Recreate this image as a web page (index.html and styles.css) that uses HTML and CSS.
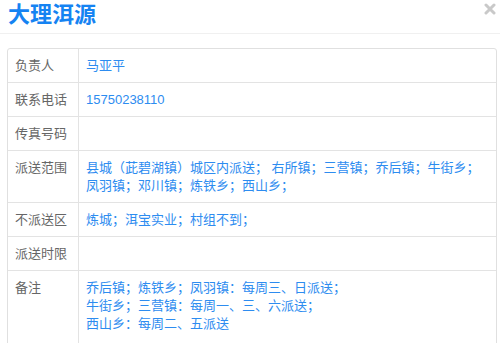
FILE: index.html
```html
<!DOCTYPE html>
<html lang="zh">
<head>
<meta charset="utf-8">
<link rel="stylesheet" href="styles.css">
</head>
<body>
<div class="dialog">
  <div class="header">
    <h1 class="title">大理洱源</h1>
    <span class="close" aria-label="关闭">
      <svg width="12" height="12" viewBox="0 0 12 12"><path d="M2 2 L10 10 M10 2 L2 10" stroke="#c9c9c9" stroke-width="3" stroke-linecap="round"/></svg>
    </span>
  </div>
  <div class="content">
    <table class="info">
      <tr><th>负责人</th><td>马亚平</td></tr>
      <tr><th>联系电话</th><td>15750238110</td></tr>
      <tr><th>传真号码</th><td></td></tr>
      <tr><th>派送范围</th><td>县城（茈碧湖镇）城区内派送； 右所镇；三营镇；乔后镇；牛街乡；凤羽镇；邓川镇；炼铁乡；西山乡；</td></tr>
      <tr><th>不派送区</th><td>炼城；洱宝实业；村组不到；</td></tr>
      <tr><th>派送时限</th><td></td></tr>
      <tr class="last"><th>备注</th><td>乔后镇；炼铁乡；凤羽镇：每周三、日派送；<br>牛街乡；三营镇：每周一、三、六派送；<br>西山乡：每周二、五派送</td></tr>
    </table>
  </div>
</div>
</body>
</html>
```

FILE: styles.css
```css
html, body {
  margin: 0;
  padding: 0;
  background: #fff;
}
body {
  font-family: "Liberation Sans", "Noto Sans CJK SC", sans-serif;
  text-spacing-trim: space-all;
}
.dialog {
  width: 500px;
}
.header {
  height: 33px;
  border-bottom: 1px solid #f0f0f0;
  display: flex;
  justify-content: space-between;
  align-items: flex-start;
  padding: 0 4px 0 8px;
  box-sizing: content-box;
}
.title {
  margin: 0;
  font-size: 22px;
  line-height: 24px;
  font-weight: bold;
  color: #1583f2;
  font-family: "Noto Sans CJK SC", sans-serif;
}
.close {
  display: flex;
  margin-top: 3px;
}
.content {
  padding: 14px 3px 0 7px;
}
.info {
  width: 100%;
  border-collapse: separate;
  border-spacing: 0;
  border: 1px solid #e0e0e0;
  border-radius: 3px;
  font-size: 13px;
  line-height: 18px;
}
.info th, .info td {
  padding: 8px 7px 7px;
  text-align: left;
  vertical-align: top;
  border-bottom: 1px solid #e3e3e3;
  font-weight: normal;
}
.info .last th, .info .last td {
  border-bottom: none;
  padding-bottom: 14px;
}
.info th {
  width: 56px;
  color: #666;
  border-right: 1px solid #e3e3e3;
}
.info td {
  color: #2d8cf0;
  font-family: "Liberation Sans", "Noto Sans CJK JP", sans-serif;
}
```
